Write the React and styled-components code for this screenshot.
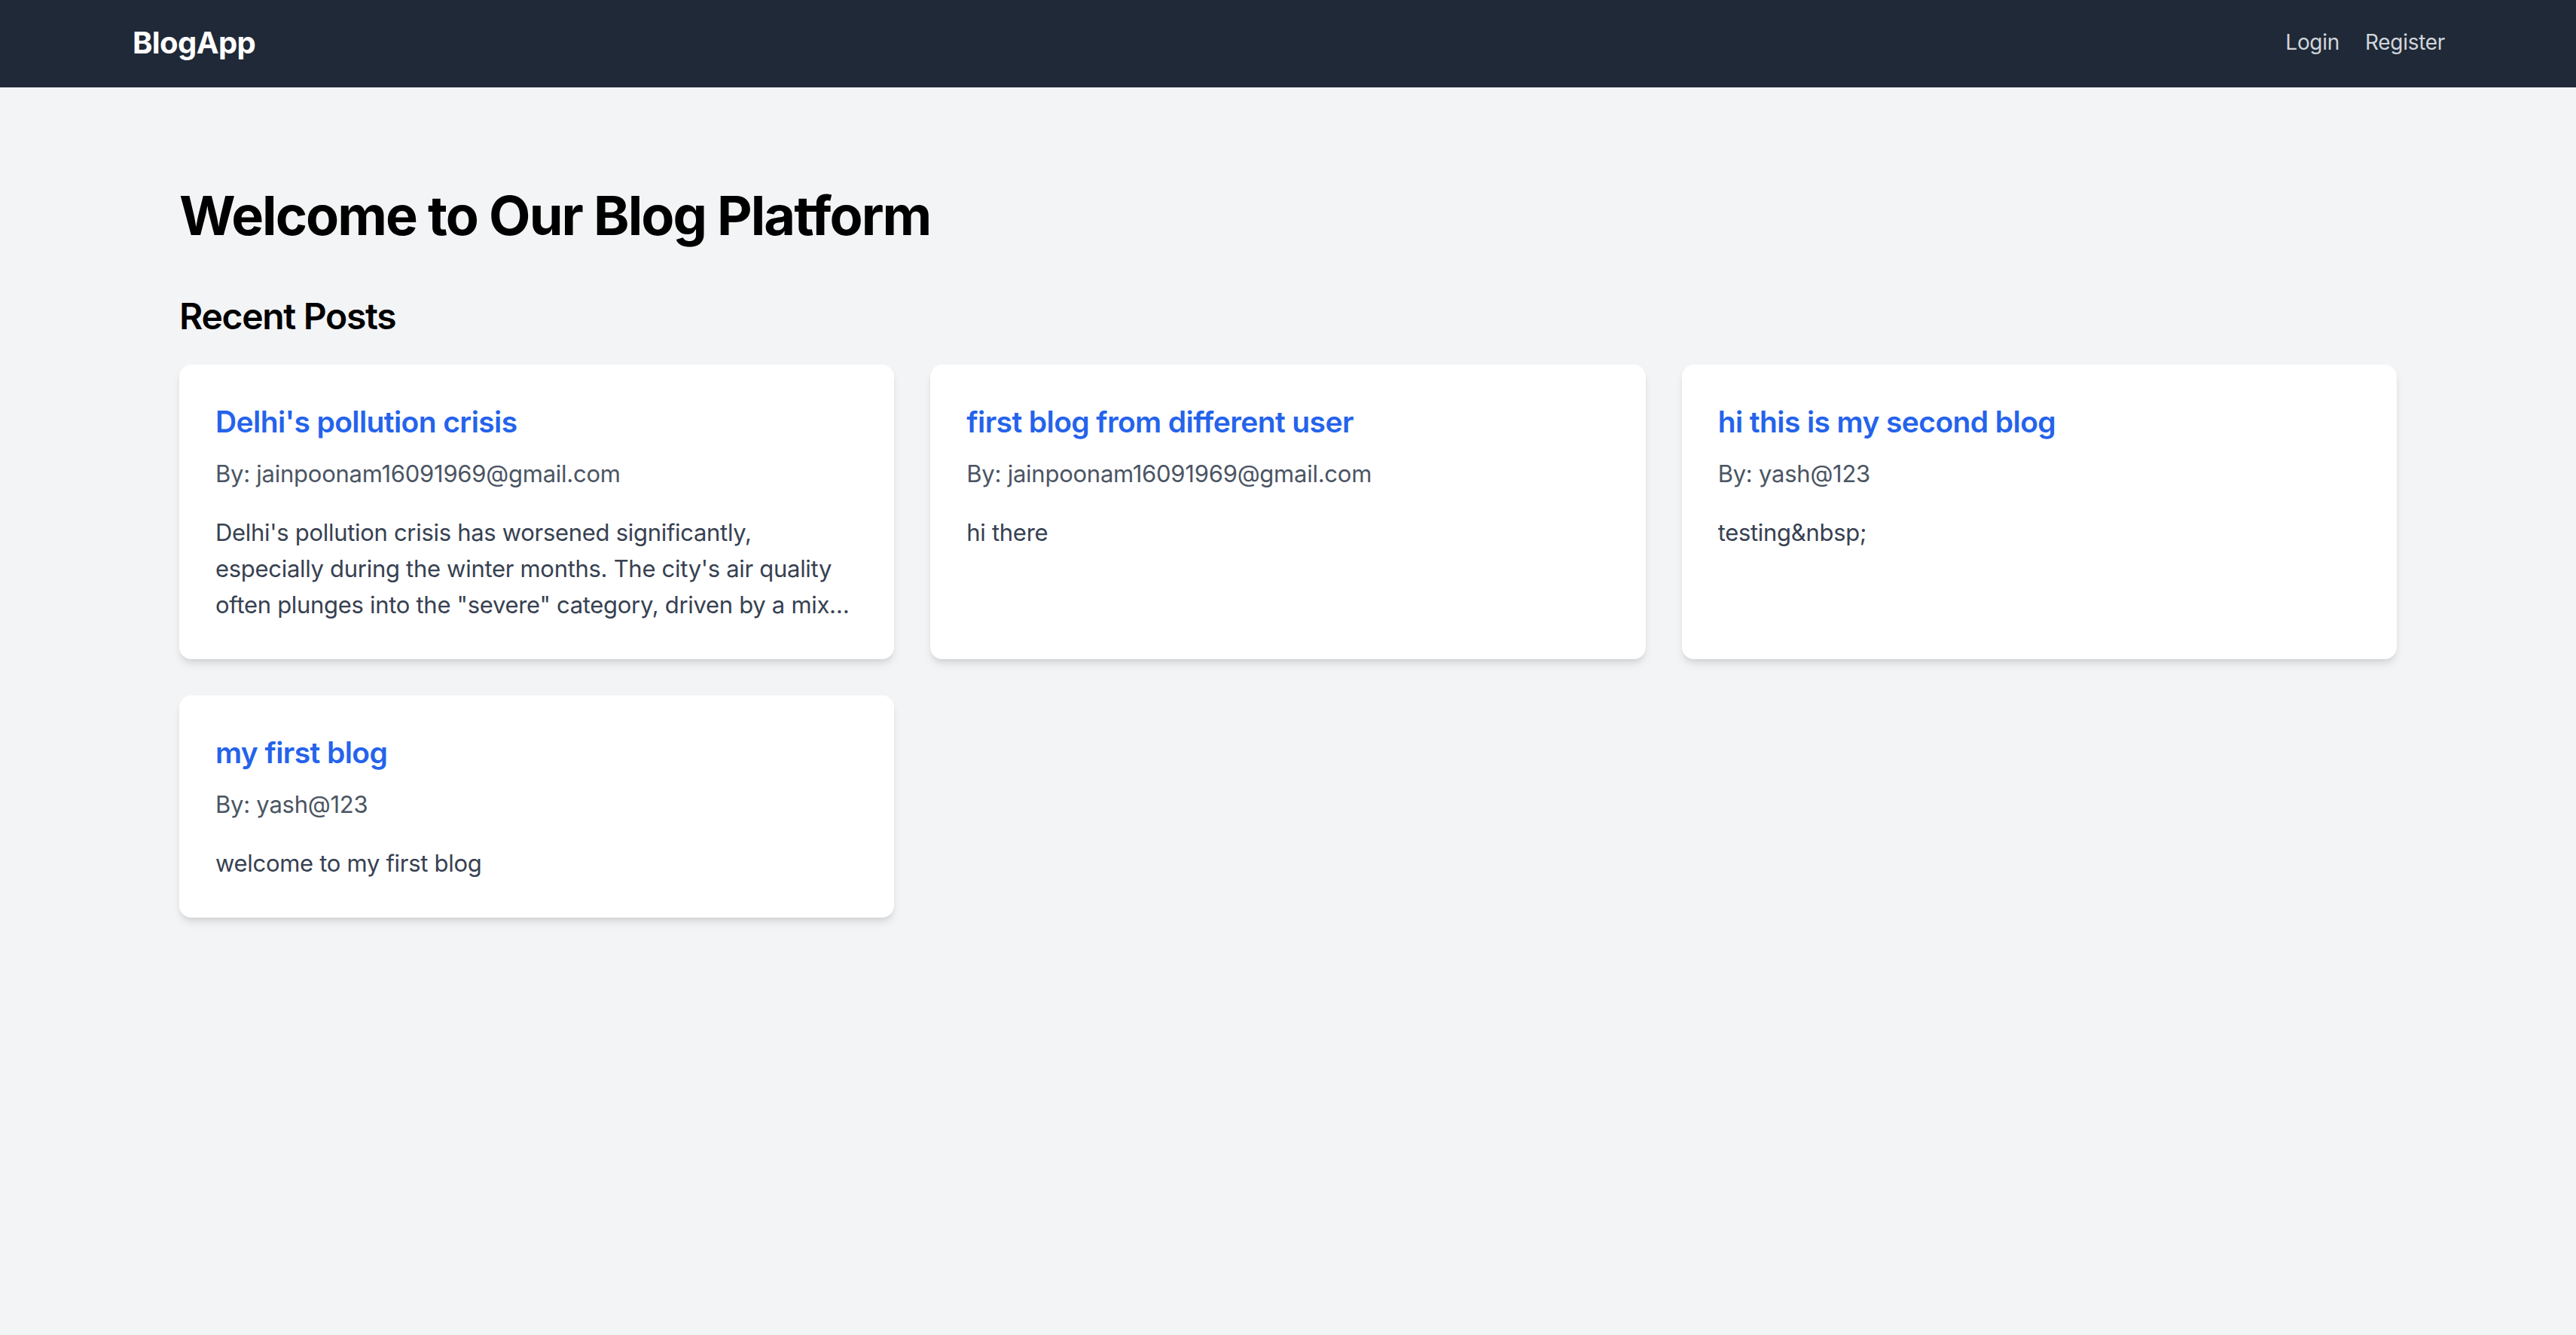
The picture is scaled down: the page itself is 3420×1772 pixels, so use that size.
import React from "react";
import styled, { createGlobalStyle } from "styled-components";

const Global = createGlobalStyle`
  * { box-sizing: border-box; }
  html, body { margin: 0; padding: 0; }
  body {
    background: #f3f4f6;
    font-family: Inter, "Noto Sans", "Liberation Sans", sans-serif;
    -webkit-font-smoothing: antialiased;
  }
`;

const Page = styled.div`
  min-height: 1772px;
  background: #f3f4f6;
`;

const NavBar = styled.nav`
  height: 116px;
  background: #1f2937;
  display: flex;
  align-items: center;
  justify-content: space-between;
  padding: 0 174px 4px 176px;
`;

const Logo = styled.a`
  color: #ffffff;
  font-size: 40px;
  font-weight: 700;
  letter-spacing: -0.6px;
  text-decoration: none;
`;

const NavLinks = styled.div`
  display: flex;
  gap: 34px;
  align-items: center;
`;

const NavLink = styled.a`
  color: #d1d5db;
  font-size: 28px;
  text-decoration: none;
  letter-spacing: -0.3px;
`;

const Main = styled.main`
  padding: 130px 238px 64px;
`;

const Title = styled.h1`
  margin: 0 0 62px;
  font-size: 72px;
  line-height: 80px;
  font-weight: 700;
  color: #000;
  letter-spacing: -1.95px;
`;

const SectionTitle = styled.h2`
  margin: 0 0 32px;
  font-size: 48px;
  line-height: 64px;
  font-weight: 600;
  color: #000;
  letter-spacing: -1.3px;
`;

const Grid = styled.div`
  display: grid;
  grid-template-columns: repeat(3, 1fr);
  gap: 48px;
`;

const Card = styled.article`
  background: #ffffff;
  border-radius: 16px;
  padding: 48px;
  box-shadow: 0 8px 12px -2px rgba(0, 0, 0, 0.1), 0 4px 8px -4px rgba(0, 0, 0, 0.1);
`;

const PostTitle = styled.h3`
  margin: 0 0 21px;
  font-size: 39px;
  line-height: 56px;
  font-weight: 600;
  color: #2563eb;
  letter-spacing: -0.6px;
`;

const Author = styled.p`
  margin: 0 0 34px;
  font-size: 31px;
  line-height: 40px;
  color: #4b5563;
  letter-spacing: -0.25px;
`;

const Excerpt = styled.p`
  margin: 0;
  font-size: 31px;
  line-height: 48px;
  color: #374151;
  letter-spacing: -0.3px;
  display: -webkit-box;
  -webkit-line-clamp: 3;
  -webkit-box-orient: vertical;
  overflow: hidden;
`;

const posts = [
  {
    title: "Delhi's pollution crisis",
    author: "jainpoonam16091969@gmail.com",
    body:
      "Delhi's pollution crisis has worsened significantly, especially during the winter months. The city's air quality often plunges into the \"severe\" category, driven by a mix\u2026",
  },
  {
    title: "first blog from different user",
    author: "jainpoonam16091969@gmail.com",
    body: "hi there",
  },
  {
    title: "hi this is my second blog",
    author: "yash@123",
    body: "testing&nbsp;",
  },
  {
    title: "my first blog",
    author: "yash@123",
    body: "welcome to my first blog",
  },
];

export default function App() {
  return (
    <Page>
      <Global />
      <NavBar>
        <Logo href="#">BlogApp</Logo>
        <NavLinks>
          <NavLink href="#">Login</NavLink>
          <NavLink href="#">Register</NavLink>
        </NavLinks>
      </NavBar>
      <Main>
        <Title>Welcome to Our Blog Platform</Title>
        <SectionTitle>Recent Posts</SectionTitle>
        <Grid>
          {posts.map((p) => (
            <Card key={p.title}>
              <PostTitle>{p.title}</PostTitle>
              <Author>By: {p.author}</Author>
              <Excerpt>{p.body}</Excerpt>
            </Card>
          ))}
        </Grid>
      </Main>
    </Page>
  );
}
